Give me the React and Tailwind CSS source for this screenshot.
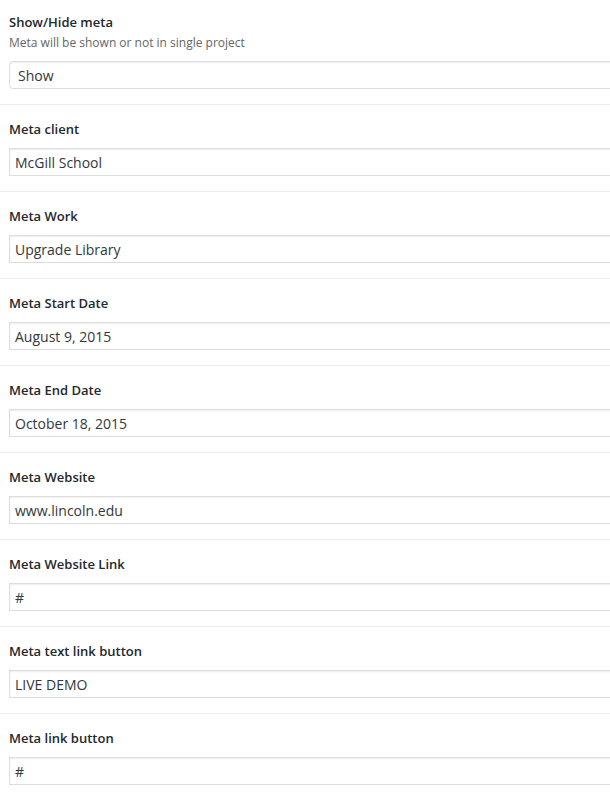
import React from "react";

const fields = [
  ["Meta client", "McGill School"],
  ["Meta Work", "Upgrade Library"],
  ["Meta Start Date", "August 9, 2015"],
  ["Meta End Date", "October 18, 2015"],
  ["Meta Website", "www.lincoln.edu"],
  ["Meta Website Link", "#"],
  ["Meta text link button", "LIVE DEMO"],
  ["Meta link button", "#"],
];

export default function App() {
  return (
    <div
      className="w-[610px] h-[800px] overflow-hidden bg-white"
      style={{ fontFamily: '"Open Sans", sans-serif' }}
    >
      <div className="pt-[13px] pb-[15px] pl-[9px] border-b border-[#eeeeee]">
        <div className="text-[13px] leading-[18px] font-semibold text-[#23282d]">Show/Hide meta</div>
        <div className="text-[12px] leading-[18px] text-[#666666] mt-[3px]">
          Meta will be shown or not in single project
        </div>
        <div className="mt-[9px] w-[620px] h-[28px] border border-[#dddddd] rounded-[4px] shadow-[inset_0_1px_2px_rgba(0,0,0,0.07)] flex items-center pl-[8px] text-[14px] text-[#32373c]">
          Show
        </div>
      </div>
      {fields.map(([label, value]) => (
        <div key={label} className="pt-[15px] pb-[15px] pl-[9px] border-b border-[#eeeeee]">
          <div className="text-[13px] leading-[18px] font-semibold text-[#23282d]">{label}</div>
          <div className="mt-[10px] w-[620px] h-[28px] border border-[#dddddd] shadow-[inset_0_1px_2px_rgba(0,0,0,0.07)] flex items-center pl-[5px] text-[14px] text-[#32373c]">
            {value}
          </div>
        </div>
      ))}
    </div>
  );
}
